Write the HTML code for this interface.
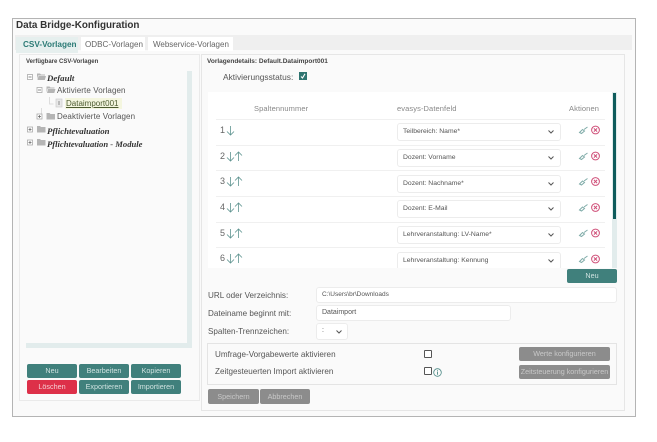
<!DOCTYPE html>
<html><head><meta charset="utf-8">
<style>
html,body{margin:0;padding:0;background:#fff;width:657px;height:442px;overflow:hidden}
body{font-family:"Liberation Sans",sans-serif;color:#444;position:relative}
.a,.t,.b,.s,.i{position:absolute;box-sizing:border-box}
.t{white-space:nowrap;line-height:12px}
.b{border-radius:2px;background:#40807c;color:#cfe2e0;font-size:7.2px;text-align:center;line-height:14px;white-space:nowrap}
.g{background:#8c8c8c;color:#c8c8c8}
.s{background:#fff;border:1px solid #ececec;border-radius:3px;left:397px;width:164px;height:18px;font-size:6.8px;color:#555;line-height:16px;padding-left:5px;white-space:nowrap}
.s svg{position:absolute;right:5px;top:5px}
.i{background:#fff;border:1px solid #ececec;border-radius:3px;font-size:7px;color:#555;line-height:14px;padding-left:5px}
.sep{position:absolute;left:216px;width:389px;height:1px;background:#f0f0f0}
.n{position:absolute;left:220px;font-size:9px;line-height:12px;color:#666}
.tree{font-size:8px;color:#555;letter-spacing:.1px}
.bi{font-family:"Liberation Serif",serif;font-size:8.800px;font-weight:bold;font-style:italic;color:#333}
.l{font-size:8.100px;color:#555}
.h{font-size:7.500px;color:#888;letter-spacing:.1px}
</style></head><body>

<div class="a" style="left:12px;top:18px;width:624px;height:399px;border:1px solid #b4b4b4;background:#fafafa"></div>
<div class="t" style="left:16px;top:20px;font-size:9.900px;font-weight:bold;color:#333">Data Bridge-Konfiguration</div>

<div class="a" style="left:15px;top:35px;width:617px;height:15px;background:#efefef"></div>
<div class="a" style="left:16px;top:37px;width:62px;height:16px;background:#e6efee"></div>
<div class="t" style="left:23px;top:39px;font-size:8.200px;color:#2b7a75;font-weight:bold">CSV-Vorlagen</div>
<div class="a" style="left:81px;top:37px;width:64px;height:14px;background:#fff"></div>
<div class="t" style="left:85px;top:39px;font-size:8.100px;color:#666">ODBC-Vorlagen</div>
<div class="a" style="left:148px;top:37px;width:85px;height:14px;background:#fff"></div>
<div class="t" style="left:153px;top:39px;font-size:8px;color:#666">Webservice-Vorlagen</div>

<div class="a" style="left:19px;top:54px;width:181px;height:347px;border:1px solid #eaeaea;background:#fafafa"></div>
<div class="a" style="left:201px;top:54px;width:424px;height:357px;border:1px solid #e6e6e6;background:#fafafa"></div>

<div class="t" style="left:26px;top:56px;font-size:6px;font-weight:bold;color:#444">Verfügbare CSV-Vorlagen</div>
<div class="a" style="left:187px;top:71px;width:5px;height:277px;background:#e2ecec"></div>
<div class="a" style="left:26px;top:343px;width:161px;height:5px;background:#e2ecec"></div>

<svg class="a" style="left:26px;top:70px" width="60" height="80" fill="none">
<path d="M15.500 38V46" stroke="#ddd"/>
<path d="M23.500 27v7h4" stroke="#ddd"/>
<g fill="#fff" stroke="#aaa" stroke-width=".8">
<rect x="1.500" y="4.500" width="5" height="5"/><rect x="11" y="17.500" width="5" height="5"/><rect x="11" y="44" width="5" height="5"/><rect x="1.500" y="57" width="5" height="5"/><rect x="1.500" y="70" width="5" height="5"/>
</g>
<path d="M2.500 7h3M12 20h3M12 46.500h3M2.500 59.500h3M4 58v3M2.500 72.500h3M4 71v3M13.500 45v3" stroke="#666" stroke-width=".7"/>
<g fill="#b5b5b5">
<path d="M11 3.500h3l1 1h4v1h-7l-1 4zM12.500 6h7.500l-1.200 4h-7.300z"/>
<path d="M20.500 16.500h3l1 1h4v1h-7l-1 4zM22 19h7.500l-1.200 4h-7.300z"/>
<path d="M20.500 43h3l1 1h4.500v5.500h-8.500z"/>
<path d="M11 56h3l1 1h4.500v5.500H11z"/>
<path d="M11 69h3l1 1h4.500v5.500H11z"/>
</g>
<rect x="30" y="29" width="6" height="8" fill="#e8e8e8" stroke="#ccc" stroke-width=".7"/>
<path d="M32 31v4h2v-4z" fill="#bbb"/>
</svg>

<div class="t bi" style="left:47px;top:71.500px">Default</div>
<div class="t tree" style="left:57px;top:84.500px">Aktivierte Vorlagen</div>
<div class="a" style="left:65px;top:98px;width:57px;height:11px;background:#f4f6df"></div>
<div class="t tree" style="left:66px;top:97.500px;color:#4c5a30;text-decoration:underline;letter-spacing:0">Dataimport001</div>
<div class="t tree" style="left:57px;top:111px">Deaktivierte Vorlagen</div>
<div class="t bi" style="left:47px;top:124.500px">Pflichtevaluation</div>
<div class="t bi" style="left:47px;top:137.500px;font-size:8.600px">Pflichtevaluation - Module</div>

<div class="b" style="left:27px;top:364px;width:50px">Neu</div>
<div class="b" style="left:79px;top:364px;width:50px">Bearbeiten</div>
<div class="b" style="left:131px;top:364px;width:50px">Kopieren</div>
<div class="b" style="left:27px;top:380px;width:50px;background:#dd3049;color:#f5d0d5">Löschen</div>
<div class="b" style="left:79px;top:380px;width:50px">Exportieren</div>
<div class="b" style="left:131px;top:380px;width:50px">Importieren</div>

<div class="t" style="left:207px;top:56px;font-size:6.500px;font-weight:bold;color:#444">Vorlagendetails: Default.Dataimport001</div>
<div class="t" style="left:223px;top:70.500px;font-size:8.400px;color:#555">Aktivierungsstatus:</div>
<div class="a" style="left:299px;top:72px;width:8px;height:8px;background:#2f7470"></div>
<svg class="a" style="left:299px;top:72px" width="8" height="8" fill="none"><path d="M2 4.500l1.500 1.500L6 1.800" stroke="#fff" stroke-width="1.100"/></svg>

<div class="a" style="left:208px;top:92px;width:404px;height:176px;background:#fff;overflow:hidden"></div>
<div class="a" style="left:612px;top:92px;width:5px;height:176px;background:#e2ecec"></div>
<div class="a" style="left:613px;top:93px;width:3px;height:126px;background:#0f5c5c"></div>

<div class="t h" style="left:254px;top:103px">Spaltennummer</div>
<div class="t h" style="left:397px;top:103px">evasys-Datenfeld</div>
<div class="t h" style="left:569px;top:103px">Aktionen</div>

<div class="sep" style="top:119px"></div><div class="sep" style="top:145px"></div><div class="sep" style="top:170px"></div><div class="sep" style="top:196px"></div><div class="sep" style="top:222px"></div><div class="sep" style="top:247px"></div>

<div class="n" style="top:124px">1</div><div class="n" style="top:150px">2</div><div class="n" style="top:175px">3</div><div class="n" style="top:201px">4</div><div class="n" style="top:227px">5</div><div class="n" style="top:252px">6</div>

<svg class="a" style="left:226px;top:121px" width="20" height="146" fill="none" stroke="#5f9490" stroke-width=".8">
<path d="M4.500 5v9M1 10.500l3.500 3.500 3.500-3.500"/>
<path d="M4.500 31v9M1 36.500l3.500 3.500 3.500-3.500M12.500 40v-9M9 34.500l3.500-3.500 3.500 3.500"/>
<path d="M4.500 56v9M1 61.500l3.500 3.500 3.500-3.500M12.500 65v-9M9 59.500l3.500-3.500 3.500 3.500"/>
<path d="M4.500 82v9M1 87.500l3.500 3.500 3.500-3.500M12.500 91v-9M9 85.500l3.500-3.500 3.500 3.500"/>
<path d="M4.500 108v9M1 113.500l3.500 3.500 3.500-3.500M12.500 117v-9M9 111.500l3.500-3.500 3.500 3.500"/>
<path d="M4.500 133v9M1 138.500l3.500 3.500 3.500-3.500M12.500 142v-9M9 136.500l3.500-3.500 3.500 3.500"/>
</svg>

<div class="s" style="top:123px">Teilbereich: Name*<svg width="8" height="6" fill="none"><path d="M1.500 1.500L4 4l2.500-2.500" stroke="#555" stroke-width="1"/></svg></div>
<div class="s" style="top:149px">Dozent: Vorname<svg width="8" height="6" fill="none"><path d="M1.500 1.500L4 4l2.500-2.500" stroke="#555" stroke-width="1"/></svg></div>
<div class="s" style="top:175px">Dozent: Nachname*<svg width="8" height="6" fill="none"><path d="M1.500 1.500L4 4l2.500-2.500" stroke="#555" stroke-width="1"/></svg></div>
<div class="s" style="top:200px">Dozent: E-Mail<svg width="8" height="6" fill="none"><path d="M1.500 1.500L4 4l2.500-2.500" stroke="#555" stroke-width="1"/></svg></div>
<div class="s" style="top:226px">Lehrveranstaltung: LV-Name*<svg width="8" height="6" fill="none"><path d="M1.500 1.500L4 4l2.500-2.500" stroke="#555" stroke-width="1"/></svg></div>
<div class="a" style="left:397px;top:252px;width:164px;height:16px;overflow:hidden"><div class="s" style="left:0;top:0">Lehrveranstaltung: Kennung<svg width="8" height="6" fill="none"><path d="M1.500 1.500L4 4l2.500-2.500" stroke="#555" stroke-width="1"/></svg></div></div>

<svg class="a" style="left:578px;top:124px" width="24" height="146" fill="none">
<g stroke="#7faba8" stroke-width="1"><path d="M1.500 8.500l3-3 2 1.500-3 2.500zM6 5.500l3.500-2.500"/></g><g stroke="#cf4f78" stroke-width="1"><circle cx="17.500" cy="6" r="3.900"/><path d="M15.900 4.400l3.200 3.200m0-3.200l-3.200 3.200"/></g>
<g transform="translate(0,26)"><g stroke="#7faba8" stroke-width="1"><path d="M1.500 8.500l3-3 2 1.500-3 2.500zM6 5.500l3.500-2.500"/></g><g stroke="#cf4f78" stroke-width="1"><circle cx="17.500" cy="6" r="3.900"/><path d="M15.900 4.400l3.200 3.200m0-3.200l-3.200 3.200"/></g></g>
<g transform="translate(0,51.500)"><g stroke="#7faba8" stroke-width="1"><path d="M1.500 8.500l3-3 2 1.500-3 2.500zM6 5.500l3.500-2.500"/></g><g stroke="#cf4f78" stroke-width="1"><circle cx="17.500" cy="6" r="3.900"/><path d="M15.900 4.400l3.200 3.200m0-3.200l-3.200 3.200"/></g></g>
<g transform="translate(0,77.500)"><g stroke="#7faba8" stroke-width="1"><path d="M1.500 8.500l3-3 2 1.500-3 2.500zM6 5.500l3.500-2.500"/></g><g stroke="#cf4f78" stroke-width="1"><circle cx="17.500" cy="6" r="3.900"/><path d="M15.900 4.400l3.200 3.200m0-3.200l-3.200 3.200"/></g></g>
<g transform="translate(0,103)"><g stroke="#7faba8" stroke-width="1"><path d="M1.500 8.500l3-3 2 1.500-3 2.500zM6 5.500l3.500-2.500"/></g><g stroke="#cf4f78" stroke-width="1"><circle cx="17.500" cy="6" r="3.900"/><path d="M15.900 4.400l3.200 3.200m0-3.200l-3.200 3.200"/></g></g>
<g transform="translate(0,129)"><g stroke="#7faba8" stroke-width="1"><path d="M1.500 8.500l3-3 2 1.500-3 2.500zM6 5.500l3.500-2.500"/></g><g stroke="#cf4f78" stroke-width="1"><circle cx="17.500" cy="6" r="3.900"/><path d="M15.900 4.400l3.200 3.200m0-3.200l-3.200 3.200"/></g></g>
</svg>

<div class="b" style="left:567px;top:269px;width:50px;height:14px">Neu</div>

<div class="t l" style="left:208px;top:290px">URL oder Verzeichnis:</div>
<div class="i" style="left:316px;top:287px;width:301px;height:16px;font-size:6.500px">C:\Users\br\Downloads</div>
<div class="t l" style="left:208px;top:308px">Dateiname beginnt mit:</div>
<div class="i" style="left:316px;top:305px;width:195px;height:16px">Dataimport</div>
<div class="t l" style="left:208px;top:326px">Spalten-Trennzeichen:</div>
<div class="i" style="left:316px;top:323px;width:32px;height:17px">:<svg class="a" style="left:18px;top:5px" width="8" height="6" fill="none"><path d="M1.500 1.500L4 4l2.500-2.500" stroke="#555" stroke-width="1"/></svg></div>

<div class="a" style="left:207px;top:343px;width:410px;height:42px;border:1px solid #e4e4e4"></div>
<div class="t l" style="left:215px;top:348.500px">Umfrage-Vorgabewerte aktivieren</div>
<div class="t l" style="left:215px;top:366px">Zeitgesteuerten Import aktivieren</div>
<div class="a" style="left:424px;top:350px;width:8px;height:8px;border:1px solid #555;border-radius:1px;background:#fff"></div>
<div class="a" style="left:424px;top:367px;width:8px;height:8px;border:1px solid #555;border-radius:1px;background:#fff"></div>
<svg class="a" style="left:433px;top:368px" width="9" height="9" fill="none"><circle cx="4.500" cy="4.500" r="3.800" stroke="#4d8a86" stroke-width=".8"/><path d="M4.500 3.500v3.200M4.500 2v.8" stroke="#4d8a86" stroke-width=".9"/></svg>
<div class="b g" style="left:519px;top:347px;width:91px">Werte konfigurieren</div>
<div class="b g" style="left:519px;top:365px;width:91px">Zeitsteuerung konfigurieren</div>
<div class="b g" style="left:208px;top:389px;width:51px;height:15px;line-height:15px">Speichern</div>
<div class="b g" style="left:260px;top:389px;width:50px;height:15px;line-height:15px">Abbrechen</div>

</body></html>
